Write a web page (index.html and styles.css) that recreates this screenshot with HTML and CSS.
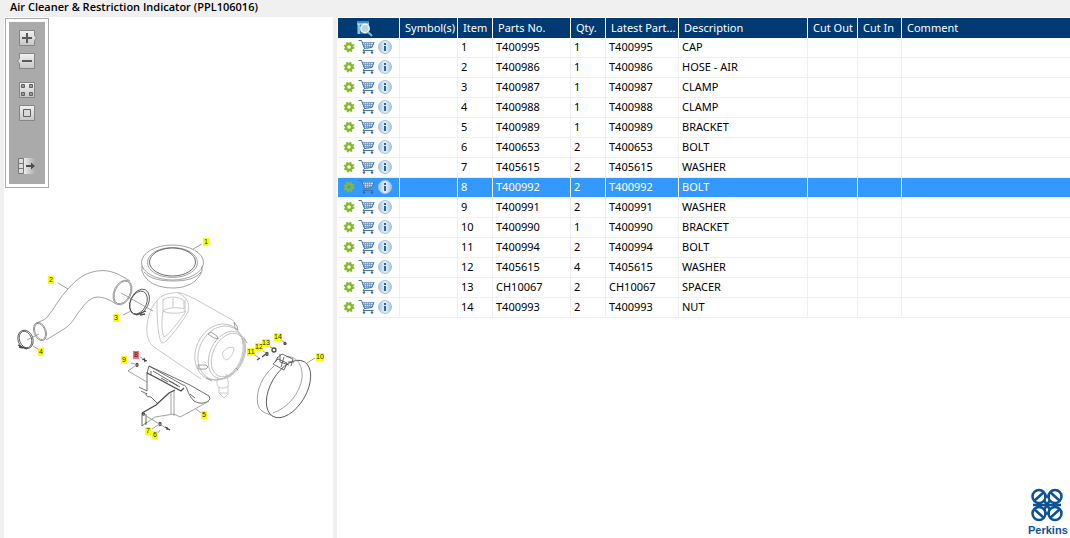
FILE: index.html
```html
<!DOCTYPE html>
<html lang="en">
<head>
    <meta charset="UTF-8">
    <meta name="viewport" content="width=device-width, initial-scale=1.0">
    <title>Air Cleaner &amp; Restriction Indicator (PPL106016)</title>
    <link rel="stylesheet" href="styles.css">
</head>
<body>
    <!-- Shared icons -->
    <svg class="sprite" aria-hidden="true">
        <linearGradient id="face" x1="0" y1="0" x2="0" y2="1">
            <stop offset="0" stop-color="#f2f2f2"/>
            <stop offset="1" stop-color="#c6c6c6"/>
        </linearGradient>
        <linearGradient id="fade" x1="0" y1="0" x2="1" y2="0">
            <stop offset="0" stop-color="#ececec"/>
            <stop offset="1" stop-color="#ababab"/>
        </linearGradient>
        <linearGradient id="glass" x1="0" y1="0" x2="1" y2="0">
            <stop offset="0" stop-color="#9fc3e3"/>
            <stop offset="0.5" stop-color="#e8f2f9"/>
            <stop offset="1" stop-color="#a5c5e0"/>
        </linearGradient>
        <symbol id="icon-gear" viewBox="0 0 12 12">
            <circle cx="6" cy="6" r="4.500" fill="none" stroke="#8dbb33" stroke-width="1.800" stroke-dasharray="1.900 1.634"/>
            <circle cx="6" cy="6" r="3" fill="none" stroke="#86b82c" stroke-width="2.400"/>
        </symbol>
        <symbol id="icon-cart" viewBox="0 0 17 15">
            <path d="M4.500 3h11l-1.500 6h-8z" fill="#d3e1f0"/>
            <path d="M4 3.500H16M4.500 5.500H15.500M5 7.500H15M6.500 3v6M8.500 3v6M10.500 3v6M12.500 3v6" fill="none" stroke="#7299c4" stroke-width="0.800"/>
            <path d="M.5 1.500H3.500L6.500 9.500M16 3L14 8.500L6.500 9.500L5 11.500H15.500" fill="none" stroke="#4674a8" stroke-width="1"/>
            <circle cx="6" cy="13.500" r="1.200" fill="#3c6694"/>
            <circle cx="14" cy="13.500" r="1.200" fill="#3c6694"/>
        </symbol>
        <symbol id="icon-info" viewBox="0 0 14 14">
            <circle cx="7" cy="7" r="6.500" fill="url(#glass)" stroke="#a9c4dc"/>
            <path d="M6 3h2v2H6zM6 6h2v5H6z" fill="#2c62a0"/>
        </symbol>
    </svg>

    <header class="page-title">
        <h1>Air Cleaner &amp; Restriction Indicator (PPL106016)</h1>
    </header>

    <main class="workspace">
        <section class="drawing-pane">
            <div class="toolbar">
                <div class="tool-group">
                    <button type="button" class="tool" aria-label="Zoom in">
                        <svg viewBox="0 0 18 18">
                            <path d="M1.500 1.500h15v5l2 2.500l-2 2.500v5h-15z" fill="url(#face)" stroke="#858585"/>
                            <path d="M9 4v10M4 9h10" stroke="#5a5a5a" stroke-width="2"/>
                        </svg>
                    </button>
                    <button type="button" class="tool" aria-label="Zoom out">
                        <svg viewBox="0 0 18 18">
                            <path d="M1.500 1.500h15v15h-15v-5l-2-2.500l2-2.500z" fill="url(#face)" stroke="#858585"/>
                            <path d="M4 9h10" stroke="#5a5a5a" stroke-width="2"/>
                        </svg>
                    </button>
                </div>
                <div class="tool-group">
                    <button type="button" class="tool" aria-label="Fit to window">
                        <svg viewBox="0 0 18 18">
                            <path d="M1.500 1.500h15v15h-15z" fill="url(#face)" stroke="#858585"/>
                            <path d="M3.500 3.500h3v3h-3zM11.500 3.500h3v3h-3zM3.500 11.500h3v3h-3zM11.500 11.500h3v3h-3z" fill="#999" stroke="#606060"/>
                        </svg>
                    </button>
                    <button type="button" class="tool" aria-label="Actual size">
                        <svg viewBox="0 0 18 18">
                            <path d="M1.500 1.500h15v15h-15z" fill="url(#face)" stroke="#858585"/>
                            <path d="M5.500 5.500h7v7h-7z" fill="#d8d8d8" stroke="#606060"/>
                        </svg>
                    </button>
                </div>
                <div class="tool-group tool-group-last">
                    <button type="button" class="tool" aria-label="Hide list">
                        <svg viewBox="0 0 18 18">
                            <path d="M6 1h11v16H6z" fill="url(#fade)"/>
                            <path d="M.5 1.500h5v15h-5zM.5 6.500h5M.5 11.500h5" fill="#ddd" stroke="#777"/>
                            <path d="M8 8h5V5.500L17 9l-4 3.500V10H8z" fill="#4c4c4c"/>
                        </svg>
                    </button>
                </div>
            </div>

            <svg class="drawing" viewBox="4 188 329 350" role="img" aria-label="Exploded view of the air cleaner">
                <!-- lid -->
                <g class="line">
                    <ellipse cx="172.500" cy="262.500" rx="31" ry="17.500"/>
                    <ellipse cx="172.500" cy="262.500" rx="25" ry="15"/>
                    <ellipse class="dark" cx="172.500" cy="262" rx="23" ry="14"/>
                    <path d="M142 266V271C146 283 159 288 173 288S198 282 202 271V266"/>
                    <path d="M144 272C150 279 161 281 173 281S196 279 201 272"/>
                </g>
                <!-- hose -->
                <g class="line">
                    <path d="M36 324C39 321 43 321 46.500 318C54 309 60 297 68 289C76 280 85 271 103 270.500C114 271 122 276 130 281"/>
                    <path d="M116 304C110 300 104 297 97 297C88 298 83 307 78 313C73 321 69 326 64 329L46 340"/>
                    <ellipse cx="122.500" cy="292.500" rx="8.500" ry="13" transform="rotate(25 122.500 292.500)"/>
                    <ellipse cx="122.500" cy="292.500" rx="7.500" ry="12" transform="rotate(25 122.500 292.500)"/>
                    <ellipse cx="40" cy="331.500" rx="6" ry="9.500" transform="rotate(-20 40 331.500)"/>
                    <ellipse cx="40" cy="331.500" rx="5" ry="8.500" transform="rotate(-20 40 331.500)"/>
                </g>
                <!-- hose clamps -->
                <g class="line dark">
                    <ellipse cx="139.500" cy="302" rx="9" ry="13.500" transform="rotate(25 139.500 302)"/>
                    <ellipse cx="138.500" cy="302.500" rx="8" ry="12" transform="rotate(25 138.500 302.500)"/>
                    <path class="bold" d="M136 315L146 311M140 315l5-1"/>
                    <ellipse cx="25.500" cy="339.500" rx="7.500" ry="9.500" transform="rotate(-20 25.500 339.500)"/>
                    <ellipse cx="25.500" cy="339.500" rx="6" ry="8.500" transform="rotate(-20 25.500 339.500)"/>
                    <path class="bold" d="M18 345l9 4M19 347l4 1"/>
                </g>
                <!-- housing -->
                <g class="line pale">
                    <path d="M157 301C151 306 146 320 147 333C148 340 150 344 154 347L201 379"/>
                    <path d="M157 301C160 295 169 293 178 292.500C184 293 190 297 195 299L234 321"/>
                    <path d="M157 301C157 320 158 338 162 343C166 345 184 319 188 312C190 305 188 297 178 293"/>
                    <path d="M163 299V311C161 323 162 333 164 337C168 336 179 321 185 313V300"/>
                    <path d="M163 300C168 296 179 296 184 301V309C178 307 168 307 163 311M173 298v9M163 311C168 314 180 314 186 311"/>
                    <ellipse cx="219" cy="352" rx="23" ry="29" transform="rotate(25 219 352)"/>
                    <ellipse cx="221" cy="353" rx="22" ry="28" transform="rotate(25 221 353)"/>
                    <ellipse cx="227" cy="355" rx="17" ry="25" transform="rotate(25 227 355)"/>
                    <ellipse cx="228" cy="355" rx="15" ry="23" transform="rotate(25 228 355)"/>
                    <path d="M223 352C226 348 231 346 234 348C234 353 230 359 226 360C223 358 222 355 223 352z"/>
                    <path d="M218 377C216 382 217 386 219 387V393L224 398L228 394V386C229 382 227 376 226 374M219 387C222 389 226 388 228 386M220 393h7"/>
                </g>
                <g class="line">
                    <path d="M208 334l3-2 6 4 1 3-4-1zM198 365h8l2 2-2 2h-8zM234 322l3 4 1 4-3-2zM244 338l3 5M236 368l2 2M206 378l6 3"/>
                </g>
                <!-- bracket -->
                <g class="line dark">
                    <path d="M147 373L149 366L183 385C188 385 186 393 194 401C201 405 207 403 210 399L209 396L190 385L149 366"/>
                    <path class="bold" d="M147 373L153 376L181 391L184 388"/>
                    <path d="M147 372V391L139 387M141 391l6 3M147 393c-3 3 2 4 4 4l6 6M153 371l27 16M151 371v4"/>
                    <path class="bold" d="M175 390L169 393L156 405L142 413"/>
                    <path class="mid" d="M171 392V414M174 391V416M145 424L155 417L174 414L180 417L195 409L209 401"/>
                    <path d="M142 413V426L147 422M146 414v11M190 394l5 4M161 378l7 4M169 381l9 5"/>
                </g>
                <!-- band -->
                <g class="line dark">
                    <ellipse cx="288.500" cy="389" rx="18" ry="31.500" transform="rotate(30 288.500 389)"/>
                    <path class="mid" d="M274 366C262 376 256 391 257.500 403C259 412 266 413 273 416M286 357C297 355 303 366 302 378C300 393 288 408 273 413"/>
                    <path d="M273 364l11 6 3-7-9-4zM277 358l5-4 11 5-2 7M280 354v8l9 3M284 357l-3 10M275 362l3-5M288 362l6 0"/>
                </g>
                <!-- small hardware -->
                <g class="line dark bold">
                    <path d="M142 359l5 2M144 358l1 4M165 427l5 3M167 427l0 3M257 360l3-2M262 357l4-3"/>
                    <ellipse cx="137" cy="365" rx="1" ry="1.500"/>
                    <ellipse cx="160" cy="424" rx="1" ry="1.500"/>
                    <ellipse cx="143.500" cy="414" rx="1" ry="1"/>
                    <ellipse cx="267" cy="354" rx="1" ry="1.500"/>
                    <ellipse cx="274" cy="350" rx="2" ry="2"/>
                    <ellipse cx="285" cy="343.500" rx="1" ry="1"/>
                </g>
                <!-- leaders -->
                <g class="line">
                    <path d="M202 244L193 249M58 283L68 289M123 315L130 311.500M121 293L153 311M27 340L39 334M33 346L38 349"/>
                    <path d="M196 409L201 413M315 358L307 363M147 382L128 371L135 366M131 363l4 1M143 414L166 428M152 429l6-4M158 433l2-3"/>
                    <path d="M255 355l4 3M262 350l4 3M269 346l3 2M281 340l3 2M140 357l2 1"/>
                </g>
                <g id="callouts"></g>
            </svg>
        </section>

        <section class="list-pane">
            <table class="parts">
                <colgroup>
                    <col class="col-actions"><col class="col-symbols"><col class="col-item">
                    <col class="col-number"><col class="col-qty"><col class="col-latest">
                    <col class="col-description"><col class="col-out"><col class="col-in"><col>
                </colgroup>
                <thead>
                    <tr>
                        <th class="search-head">
                            <button type="button" class="icon-btn" aria-label="Search parts">
                                <svg class="search-icon" viewBox="0 0 18 17">
                                    <path d="M1 1h12v13H1z" fill="#3191c8"/>
                                    <path d="M1 4h12M3 4v10" stroke="#e8f4fb" stroke-width="1"/>
                                    <path d="M4 5h9v9H4z" fill="#2675a9"/>
                                    <circle cx="9" cy="8.500" r="4.200" fill="#b9d4e3" stroke="#edf5fa" stroke-width="1.500"/>
                                    <path d="M12 12l4 4" stroke="#79b5dc" stroke-width="2"/>
                                </svg>
                            </button>
                        </th>
                        <th>Symbol(s)</th>
                        <th>Item</th>
                        <th>Parts No.</th>
                        <th>Qty.</th>
                        <th>Latest Part...</th>
                        <th>Description</th>
                        <th>Cut Out</th>
                        <th>Cut In</th>
                        <th>Comment</th>
                    </tr>
                </thead>
                <tbody id="parts-body"></tbody>
            </table>

            <svg class="logo" viewBox="0 0 42 50" role="img" aria-label="Perkins">
                <g fill="none" stroke="#0c5297" stroke-width="2.500">
                    <circle cx="11" cy="8.500" r="6.500"/>
                    <circle cx="27" cy="8.500" r="6.500"/>
                    <circle cx="11" cy="25.500" r="6.500"/>
                    <circle cx="27" cy="25.500" r="6.500"/>
                    <path d="M6 13L16 4M22 4l10 9M6 21l10 9M32 21l-10 9"/>
                    <path d="M16 12l6 10M22 12l-6 10M16 8.500h6M16 25.500h6M5 17h28"/>
                </g>
                <text x="0" y="46">Perkins</text>
            </svg>
        </section>
    </main>

    <script>
        // number, description, quantity; item numbers follow the order
        const parts = [
            ['T400995', 'CAP', 1],
            ['T400986', 'HOSE - AIR', 1],
            ['T400987', 'CLAMP', 1],
            ['T400988', 'CLAMP', 1],
            ['T400989', 'BRACKET', 1],
            ['T400653', 'BOLT', 2],
            ['T405615', 'WASHER', 2],
            ['T400992', 'BOLT', 2],
            ['T400991', 'WASHER', 2],
            ['T400990', 'BRACKET', 1],
            ['T400994', 'BOLT', 2],
            ['T405615', 'WASHER', 4],
            ['CH10067', 'SPACER', 2],
            ['T400993', 'NUT', 2]
        ];
        const selected = 8;

        // centre of each callout on the drawing
        const callouts = [
            [206, 242], [51, 280], [116, 318], [41, 352], [204, 415], [155, 435], [148, 431],
            [136, 355], [124, 360], [320, 357], [251, 352], [259, 347], [266, 343], [278, 337]
        ];

        function iconButton(name, label) {
            return `<button type="button" class="icon-btn" aria-label="${label}"><svg class="icon-${name}"><use href="#icon-${name}"/></svg></button>`;
        }

        document.getElementById('parts-body').innerHTML = parts.map(([number, description, qty], i) => `
            <tr class="${i + 1 === selected ? 'selected' : ''}">
                <td><div class="actions">${iconButton('gear', 'Options')}${iconButton('cart', 'Add to cart')}${iconButton('info', 'Details')}</div></td>
                <td></td>
                <td>${i + 1}</td>
                <td>${number}</td>
                <td>${qty}</td>
                <td>${number}</td>
                <td>${description}</td>
                <td></td>
                <td></td>
                <td></td>
            </tr>`).join('');

        document.getElementById('callouts').innerHTML = callouts.map(([x, y], i) => {
            const width = i < 9 ? 6 : 8;
            const active = i + 1 === selected ? ' active' : '';
            return `<rect class="callout${active}" x="${x - width / 2}" y="${y - 4}" width="${width}" height="8"/>
                <text class="callout-text" x="${x}" y="${y + 2}">${i + 1}</text>`;
        }).join('');
    </script>
</body>
</html>
```
FILE: styles.css
```css
* {
    box-sizing: border-box;
}
body {
    display: flex;
    flex-direction: column;
    min-height: 100vh;
    margin: 0;
    background: #f0f0f0;
    color: #000;
    font-family: "Noto Sans", "Open Sans", sans-serif;
    font-size: 11px;
}
.sprite {
    position: absolute;
    width: 0;
    height: 0;
}
.page-title {
    padding: 0 10px 3px;
}
.page-title h1 {
    margin: 0;
    font-family: "Open Sans", "Noto Sans", sans-serif;
    font-size: 11px;
    font-weight: 600;
    line-height: 14px;
}
.workspace {
    display: flex;
    flex: 1;
    gap: 4px;
    padding-left: 4px;
}
.drawing-pane {
    flex: 0 0 329px;
    padding-top: 1px;
    background: #fff;
}
.toolbar {
    display: flex;
    flex-direction: column;
    gap: 11px;
    width: 44px;
    margin-left: 1px;
    padding: 10px 0 12px;
    border: 1px solid #aaa;
    background: #aaa;
    box-shadow: inset 0 0 0 3px #fff;
}
.tool-group {
    display: flex;
    flex-direction: column;
    align-items: center;
    gap: 5px;
}
.tool-group-last {
    padding-top: 24px;
}
.tool {
    width: 18px;
    height: 18px;
    padding: 0;
    border: 0;
    background: none;
    cursor: pointer;
}
.tool svg {
    display: block;
    overflow: visible;
}
.drawing {
    display: block;
    width: 100%;
}
.line {
    fill: none;
    stroke: #8c8c8c;
    stroke-width: 0.8;
}
.dark {
    stroke: #4a4a4a;
}
.mid {
    stroke: #8c8c8c;
}
.pale {
    stroke: #bbb;
}
.bold {
    stroke-width: 1.3;
}
.callout {
    fill: #ffff00;
}
.callout.active {
    fill: #f47272;
}
.callout-text {
    fill: #222;
    font-family: "Liberation Sans", Arial, sans-serif;
    font-size: 7px;
    text-anchor: middle;
}
.list-pane {
    display: flex;
    flex: 1;
    flex-direction: column;
    justify-content: space-between;
    min-width: 0;
    padding: 1px 0 0 1px;
    background: #fff;
}
.parts {
    width: 100%;
    border-collapse: separate;
    border-spacing: 0;
    table-layout: fixed;
}
.col-actions {
    width: 62px;
}
.col-symbols {
    width: 58px;
}
.col-item,
.col-qty {
    width: 35px;
}
.col-number {
    width: 78px;
}
.col-latest {
    width: 73px;
}
.col-description {
    width: 129px;
}
.col-out {
    width: 50px;
}
.col-in {
    width: 44px;
}
.parts th,
.parts td {
    height: 20px;
    padding: 0 0 0 3px;
    border-right: 1px solid #f0f0f0;
    line-height: 18px;
    text-align: left;
    white-space: nowrap;
}
.parts th {
    padding-left: 5px;
    border-right-color: #fff;
    background: #003a73;
    color: #fff;
    font-weight: normal;
}
.parts td {
    padding-bottom: 2px;
    border-bottom: 1px solid #f0f0f0;
    line-height: 17px;
}
.parts th:last-child,
.parts td:last-child {
    border-right: 0;
}
.parts .selected td {
    background: #3399ff;
    color: #fff;
}
.parts .search-head {
    padding: 0 0 0 18px;
}
.actions {
    display: flex;
    align-items: center;
    gap: 3px;
    padding-left: 2px;
}
.icon-btn {
    display: block;
    padding: 0;
    border: 0;
    background: none;
    cursor: pointer;
}
.icon-btn svg {
    display: block;
}
.search-icon {
    width: 18px;
    height: 17px;
}
.icon-gear {
    width: 12px;
    height: 12px;
}
.icon-cart {
    width: 17px;
    height: 15px;
}
.icon-info {
    width: 14px;
    height: 14px;
}
.logo {
    align-self: flex-end;
    width: 42px;
    height: 50px;
}
.logo text {
    fill: #0c5297;
    font-family: "Liberation Sans", Arial, sans-serif;
    font-size: 11px;
    font-weight: bold;
}
```
